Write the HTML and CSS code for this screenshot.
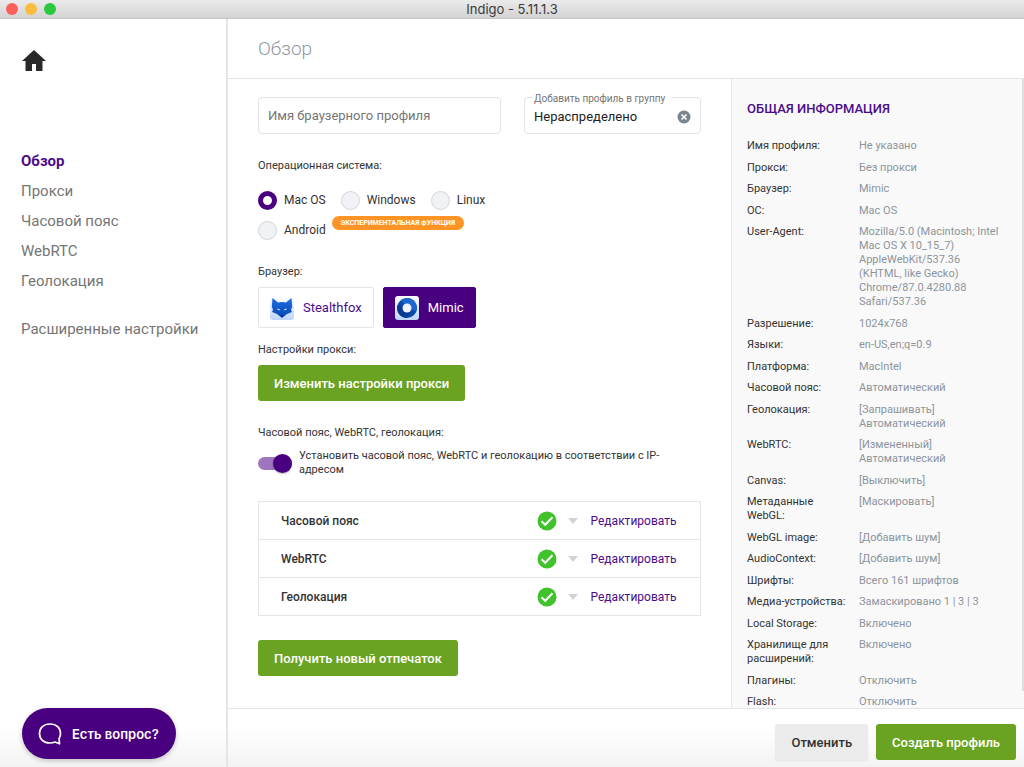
FILE: index.html
```html
<!DOCTYPE html>
<html lang="ru">
<head>
<meta charset="utf-8">
<title>Indigo - 5.11.1.3</title>
<link rel="stylesheet" href="styles.css">
</head>
<body>
<div class="window">
  <header class="titlebar">
    <div class="lights"><span class="light red"></span><span class="light yellow"></span><span class="light green"></span></div>
    <div class="titlebar-text">Indigo - 5.11.1.3</div>
    <div></div>
  </header>
  <div class="app">
    <aside class="sidebar">
      <a class="home" href="#" aria-label="Домой"><svg viewBox="0 0 24 21" width="24" height="21"><path d="M12 0 24 11h-3.500v10H14v-7h-4v7H3.500V11H0z" fill="#292929"/></svg></a>
      <nav class="nav">
        <a class="nav-link active" href="#">Обзор</a>
        <a class="nav-link" href="#">Прокси</a>
        <a class="nav-link" href="#">Часовой пояс</a>
        <a class="nav-link" href="#">WebRTC</a>
        <a class="nav-link" href="#">Геолокация</a>
        <a class="nav-link advanced" href="#">Расширенные настройки</a>
      </nav>
      <button class="help" type="button">
        <svg viewBox="0 0 24 22" width="24" height="22" fill="none" stroke="#fff" stroke-width="1.700" stroke-linejoin="round"><path d="M12 1C5.500 1 1.500 5 1.500 10.500S5.500 20 12 20c2.200 0 3.700-.4 5-1l4.500 1.800-.4-5.300c1-1.500 1.400-3.100 1.400-5C22.500 5 18.500 1 12 1z"/></svg>
        <span>Есть вопрос?</span>
      </button>
    </aside>
    <div class="page">
      <header class="page-header"><h1 class="page-title">Обзор</h1></header>
      <div class="content">
        <main class="form">
          <div class="top-fields">
            <input class="name-input" type="text" placeholder="Имя браузерного профиля" aria-label="Имя браузерного профиля">
            <fieldset class="group-field">
              <legend><label for="group">Добавить профиль в группу</label></legend>
              <input id="group" class="group-input" type="text" value="Нераспределено">
              <button class="clear" type="button" aria-label="Очистить"><svg viewBox="0 0 14 14" width="14" height="14"><circle cx="7" cy="7" r="6.500" fill="#79858f"/><path d="m4.500 4.500 5 5m0-5-5 5" stroke="#fff" stroke-width="1.600"/></svg></button>
            </fieldset>
          </div>

          <div class="caption os-caption">Операционная система:</div>
          <div class="radios">
            <label class="radio"><input type="radio" name="os" checked>Mac OS</label>
            <label class="radio"><input type="radio" name="os">Windows</label>
            <label class="radio"><input type="radio" name="os">Linux</label>
          </div>
          <div class="radios">
            <label class="radio"><input type="radio" name="os">Android</label>
            <span class="badge">ЭКСПЕРИМЕНТАЛЬНАЯ ФУНКЦИЯ</span>
          </div>

          <div class="caption browser-caption">Браузер:</div>
          <div class="browsers">
            <button class="browser" type="button">
              <svg viewBox="0 0 24 24" width="24" height="24"><defs><linearGradient id="tile" x2="0" y2="1"><stop offset="0" stop-color="#fff"/><stop offset="1" stop-color="#bcd6fb"/></linearGradient><linearGradient id="fur" x2="0" y2="1"><stop offset="0" stop-color="#1d6de0"/><stop offset="1" stop-color="#0646b4"/></linearGradient></defs><rect width="24" height="24" rx="3" fill="url(#tile)"/><path d="M2.500 2 8 6.500Q12 5.500 16 6.500L21.500 2l.7 8.500L21 14l1 2-5 2-5 4-5-4-5-2 1-2-1.200-3.500z" fill="url(#fur)"/><path d="m7 12.200 3 1.300v.8l-2-.3zm10 0-3 1.300v.8l2-.3z" fill="#cfe2ff"/><path d="M10.500 19h3L12 21z" fill="#062b70"/></svg>
              <span>Stealthfox</span>
            </button>
            <button class="browser selected" type="button">
              <svg viewBox="0 0 24 24" width="24" height="24"><rect width="24" height="24" rx="3" fill="url(#tile)"/><circle cx="12" cy="12" r="10" fill="#0b49ad"/><path d="M12 2a10 10 0 0 1 9.500 13L12 12 6 4z" fill="#1d68d0"/><path d="M2.500 9A10 10 0 0 0 12 22l4-9z" fill="#0a3b8e"/><circle cx="12" cy="12" r="4.500" fill="#edf4ff"/></svg>
              <span>Mimic</span>
            </button>
          </div>

          <div class="caption proxy-caption">Настройки прокси:</div>
          <button class="btn green" type="button">Изменить настройки прокси</button>

          <div class="caption geo-caption">Часовой пояс, WebRTC, геолокация:</div>
          <label class="toggle"><input type="checkbox" role="switch" checked><span>Установить часовой пояс, WebRTC и геолокацию в соответствии с IP-<wbr>адресом</span></label>

          <table class="checks">
            <tr><th scope="row">Часовой пояс</th><td class="mark"><svg viewBox="0 0 20 20" width="20" height="20"><circle cx="10" cy="10" r="9.500" fill="#41c12b"/><path d="m4.500 10.300 3.700 3.500 7.300-7.600" fill="none" stroke="#fff" stroke-width="2"/></svg></td><td class="arrow"><svg viewBox="0 0 10 6" width="10" height="6"><path d="M0 0h10L5 6z" fill="#cfd4d9"/></svg></td><td class="edit"><a href="#">Редактировать</a></td></tr>
            <tr><th scope="row">WebRTC</th><td class="mark"><svg viewBox="0 0 20 20" width="20" height="20"><circle cx="10" cy="10" r="9.500" fill="#41c12b"/><path d="m4.500 10.300 3.700 3.500 7.300-7.600" fill="none" stroke="#fff" stroke-width="2"/></svg></td><td class="arrow"><svg viewBox="0 0 10 6" width="10" height="6"><path d="M0 0h10L5 6z" fill="#cfd4d9"/></svg></td><td class="edit"><a href="#">Редактировать</a></td></tr>
            <tr><th scope="row">Геолокация</th><td class="mark"><svg viewBox="0 0 20 20" width="20" height="20"><circle cx="10" cy="10" r="9.500" fill="#41c12b"/><path d="m4.500 10.300 3.700 3.500 7.300-7.600" fill="none" stroke="#fff" stroke-width="2"/></svg></td><td class="arrow"><svg viewBox="0 0 10 6" width="10" height="6"><path d="M0 0h10L5 6z" fill="#cfd4d9"/></svg></td><td class="edit"><a href="#">Редактировать</a></td></tr>
          </table>
          <button class="btn green" type="button">Получить новый отпечаток</button>
        </main>

        <aside class="info">
          <h2 class="info-title">ОБЩАЯ ИНФОРМАЦИЯ</h2>
          <dl class="info-list">
            <div><dt>Имя профиля:</dt><dd>Не указано</dd></div>
            <div><dt>Прокси:</dt><dd>Без прокси</dd></div>
            <div><dt>Браузер:</dt><dd>Mimic</dd></div>
            <div><dt>ОС:</dt><dd>Mac OS</dd></div>
            <div><dt>User-Agent:</dt><dd>Mozilla/5.0 (Macintosh; Intel Mac OS X 10_15_7)<br>AppleWebKit/537.36<br>(KHTML, like Gecko)<br>Chrome/87.0.4280.88<br>Safari/537.36</dd></div>
            <div><dt>Разрешение:</dt><dd>1024x768</dd></div>
            <div><dt>Языки:</dt><dd>en-US,en;q=0.9</dd></div>
            <div><dt>Платформа:</dt><dd>MacIntel</dd></div>
            <div><dt>Часовой пояс:</dt><dd>Автоматический</dd></div>
            <div><dt>Геолокация:</dt><dd>[Запрашивать]<br>Автоматический</dd></div>
            <div><dt>WebRTC:</dt><dd>[Измененный]<br>Автоматический</dd></div>
            <div><dt>Canvas:</dt><dd>[Выключить]</dd></div>
            <div><dt>Метаданные<br>WebGL:</dt><dd>[Маскировать]</dd></div>
            <div><dt>WebGL image:</dt><dd>[Добавить шум]</dd></div>
            <div><dt>AudioContext:</dt><dd>[Добавить шум]</dd></div>
            <div><dt>Шрифты:</dt><dd>Всего 161 шрифтов</dd></div>
            <div><dt>Медиа-устройства:</dt><dd>Замаскировано 1 | 3 | 3</dd></div>
            <div><dt>Local Storage:</dt><dd>Включено</dd></div>
            <div><dt>Хранилище для<br>расширений:</dt><dd>Включено</dd></div>
            <div><dt>Плагины:</dt><dd>Отключить</dd></div>
            <div><dt>Flash:</dt><dd>Отключить</dd></div>
          </dl>
        </aside>
      </div>
      <footer class="footer">
        <button class="btn gray" type="button">Отменить</button>
        <button class="btn green" type="button">Создать профиль</button>
      </footer>
    </div>
  </div>
</div>
</body>
</html>
```
FILE: styles.css
```css
* { box-sizing: border-box; }
body { margin: 0; font-family: Roboto, "Liberation Sans", sans-serif; font-size: 12px; line-height: 14px; color: #333; }
button, input { font-family: inherit; margin: 0; }
button { cursor: pointer; }
a { text-decoration: none; }
svg { display: block; flex: none; }

.window { display: flex; flex-direction: column; height: 100vh; background: #fff; }
.titlebar { display: grid; grid-template-columns: 1fr auto 1fr; align-items: center; height: 19px; flex: none; padding: 0 6px; background: linear-gradient(#ebebeb, #d3d3d3); border-bottom: 1px solid #c4c4c4; }
.titlebar-text { font-family: Inter, sans-serif; font-size: 13px; color: #3a3a3a; }
.lights { display: flex; gap: 7px; }
.light { width: 12px; height: 12px; border-radius: 50%; }
.red { background: #fc605b; }
.yellow { background: #fdbc40; }
.green.light { background: #2bc840; }

.app { display: flex; flex: 1; min-height: 0; background: linear-gradient(transparent calc(100% - 40px), #f3f3f3); }
.sidebar { display: flex; flex-direction: column; align-items: flex-start; width: 228px; flex: none; padding: 31px 20px 8px 21px; border-right: 2px solid #e4e4ea; }
.home { padding-left: 1px; }
.nav { display: flex; flex-direction: column; padding-top: 75px; flex: 1; }
.nav-link { font-size: 15px; line-height: 30px; color: #757575; white-space: nowrap; }
.nav-link.active { color: #4b0c8c; font-weight: 700; }
.nav-link.advanced { margin-top: 18px; }
.help { display: flex; align-items: center; gap: 10px; height: 51px; margin-left: 1px; padding: 0 17px 0 16px; border: 0; border-radius: 26px; background: #480080; color: #fff; font-family: Inter, sans-serif; font-size: 13px; font-weight: 600; white-space: nowrap; box-shadow: 0 2px 5px #0003; }

.page { display: flex; flex-direction: column; flex: 1; min-width: 0; }
.page-header { display: flex; align-items: center; height: 60px; flex: none; padding-left: 30px; border-bottom: 1px solid #e4e4ea; }
.page-title { margin: 0; font-size: 19px; line-height: 24px; font-weight: 300; color: #8d97a3; }
.content { display: flex; flex: 1; min-height: 0; }
.form { flex: 1; min-width: 0; padding: 18px 30px 0; background: #fff; overflow: hidden; }

.top-fields { display: flex; gap: 23px; align-items: stretch; height: 37px; }
.name-input { flex: 1; min-width: 0; padding: 0 9px; border: 1px solid #e2e2e2; border-radius: 4px; font-size: 13px; color: #333; }
.name-input::placeholder { color: #757575; }
.group-field { display: flex; align-items: center; flex: 0 0 177px; min-width: 0; margin: -8px 0 0; padding: 0 9px 5px 8px; border: 1px solid #e2e2e2; border-radius: 4px; }
.group-field legend { padding: 4px 6px 0 1px; font-size: 10px; line-height: 12px; color: #757575; }
.group-input { flex: 1; min-width: 0; padding: 0 1px; border: 0; background: none; font-size: 13px; line-height: 18px; color: #222; }
.clear { padding: 0; border: 0; background: none; }

.caption { font-size: 11px; line-height: 14px; }
.os-caption { margin: 25px 0 12px; }
.radios { display: flex; gap: 15px; height: 30px; }
.radio { display: flex; align-items: center; gap: 7px; font-size: 12px; white-space: nowrap; }
.radio input { appearance: none; width: 19px; height: 19px; border: 1px solid #d2d5dc; border-radius: 50%; background: #f1f2f5; }
.radio input:checked { border: 5px solid #480080; background: #fff; }
.badge { height: 14px; margin: 1px 0 0 -9px; padding: 0 9px; border-radius: 7px; background: #ff9426; color: #fff; font-size: 7px; line-height: 14px; font-weight: 700; }

.browser-caption { margin: 20px 0 8px; }
.browsers { display: flex; gap: 9px; }
.browser { display: flex; align-items: center; gap: 9px; height: 41px; padding: 0 11px; border: 1px solid #e4e4ea; border-radius: 2px; background: #fff; color: #4b0c8c; font-size: 13px; }
.browser.selected { border-color: #480080; background: #480080; color: #fff; }
.proxy-caption { margin: 15px 0 8px; }
.btn { height: 36px; padding: 0 16px; border: 0; border-radius: 3px; font-size: 13px; font-weight: 500; white-space: nowrap; }
.btn.green { background: #6aa322; color: #fff; }
.btn.gray { background: #ebebeb; color: #333; box-shadow: 0 1px 2px #0001; }
.geo-caption { margin: 25px 0 9px; }
.toggle { display: flex; align-items: center; gap: 7px; padding-right: 24px; font-size: 11px; line-height: 14px; }
.toggle input { appearance: none; display: flex; align-items: center; justify-content: flex-end; width: 34px; height: 13px; flex: none; border-radius: 7px; background: #9d76be; }
.toggle input::before { content: ""; width: 19px; height: 19px; flex: none; border-radius: 50%; background: #480080; box-shadow: 0 1px 2px #0004; }
.checks { width: 100%; margin: 24px 0; border-collapse: collapse; border: 1px solid #e4e4ea; }
.checks tr { height: 38px; border-bottom: 1px solid #e4e4ea; }
.checks th { padding: 0 0 0 22px; text-align: left; font-weight: 500; }
.checks td { padding: 0; }
.checks .mark { width: 31px; }
.checks .arrow { width: 23px; }
.checks .edit { width: 110px; }
.checks a { color: #4b0c8c; }

.info { position: relative; display: flex; flex-direction: column; width: 293px; flex: none; padding: 22px 18px 0 15px; border-left: 1px solid #e4e4ea; background: #f9f9f9; overflow: hidden; }
.info::after { content: ""; position: absolute; top: 0; right: 0; bottom: 17px; width: 2px; background: #dfdfe2; }
.info-title { margin: 0 0 22px; font-size: 13px; line-height: 16px; font-weight: 500; color: #4b0c8c; }
.info-list { display: flex; flex-direction: column; justify-content: space-between; flex: 1; margin: 0 0 -1px; font-size: 11px; line-height: 14px; }
.info-list div { display: grid; grid-template-columns: 112px 1fr; }
.info-list dd { margin: 0; color: #8c949c; }
.footer { display: flex; align-items: center; justify-content: flex-end; gap: 8px; height: 59px; flex: none; padding: 8px 8px 0; border-top: 1px solid #e4e4ea; }
```
